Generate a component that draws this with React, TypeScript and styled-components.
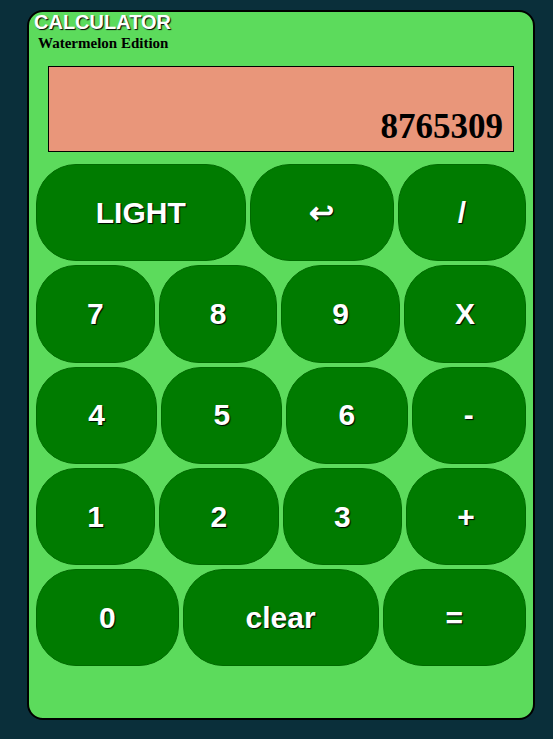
import React from "react";
import styled, { createGlobalStyle } from "styled-components";

const GlobalStyle = createGlobalStyle`
  html, body {
    margin: 0;
    padding: 0;
    background: #0a2f3a;
  }
  body {
    font-family: "Liberation Sans", Arial, sans-serif;
  }
`;

const Card = styled.div`
  box-sizing: border-box;
  width: 508px;
  height: 710px;
  margin: 10px 0 0 27px;
  background: #5cdb5c;
  border: 2px solid #000;
  border-radius: 16px;
  padding: 0 7px;
  display: flex;
  flex-direction: column;
`;

const Title = styled.h1`
  margin: 0 0 0 -2px;
  font-family: "Liberation Sans", Arial, sans-serif;
  font-size: 20px;
  line-height: 20px;
  font-weight: bold;
  color: #fff;
  text-shadow: 1px 1px 1px #000;
`;

const Subtitle = styled.h2`
  margin: 3px 0 0 2px;
  font-family: "Liberation Serif", "Times New Roman", serif;
  font-size: 15px;
  line-height: 17px;
  font-weight: bold;
  color: #000;
`;

const Display = styled.div`
  box-sizing: border-box;
  height: 86px;
  margin: 14px 12px 12px 12px;
  background: #e9967a;
  border: 1px solid #000;
  display: flex;
  align-items: flex-end;
  justify-content: flex-end;
  padding: 0 10px 4px;
  font-family: "Liberation Serif", "Times New Roman", serif;
  font-size: 35px;
  line-height: 40px;
  font-weight: bold;
  color: #000;
`;

const Keypad = styled.div`
  display: flex;
  flex-direction: column;
  gap: 4px;
`;

const Row = styled.div`
  display: flex;
  gap: 4px;
`;

const Key = styled.button`
  flex: 1 1 auto;
  height: 97.3px;
  padding: 0 10px;
  background: #007b00;
  border: 1px solid #006a00;
  border-radius: 40px;
  color: #fff;
  font-family: "Liberation Sans", Arial, sans-serif;
  font-size: 30px;
  font-weight: bold;
  text-shadow: 1px 1px 1px #000;
  cursor: pointer;
`;

const rows: string[][] = [
  ["LIGHT", "↩", "/"],
  ["7", "8", "9", "X"],
  ["4", "5", "6", "-"],
  ["1", "2", "3", "+"],
  ["0", "clear", "="],
];

export default function App() {
  return (
    <>
      <GlobalStyle />
      <Card>
        <Title>CALCULATOR</Title>
        <Subtitle>Watermelon Edition</Subtitle>
        <Display>8765309</Display>
        <Keypad>
          {rows.map((r, i) => (
            <Row key={i}>
              {r.map((k) => (
                <Key key={k}>{k}</Key>
              ))}
            </Row>
          ))}
        </Keypad>
      </Card>
    </>
  );
}
